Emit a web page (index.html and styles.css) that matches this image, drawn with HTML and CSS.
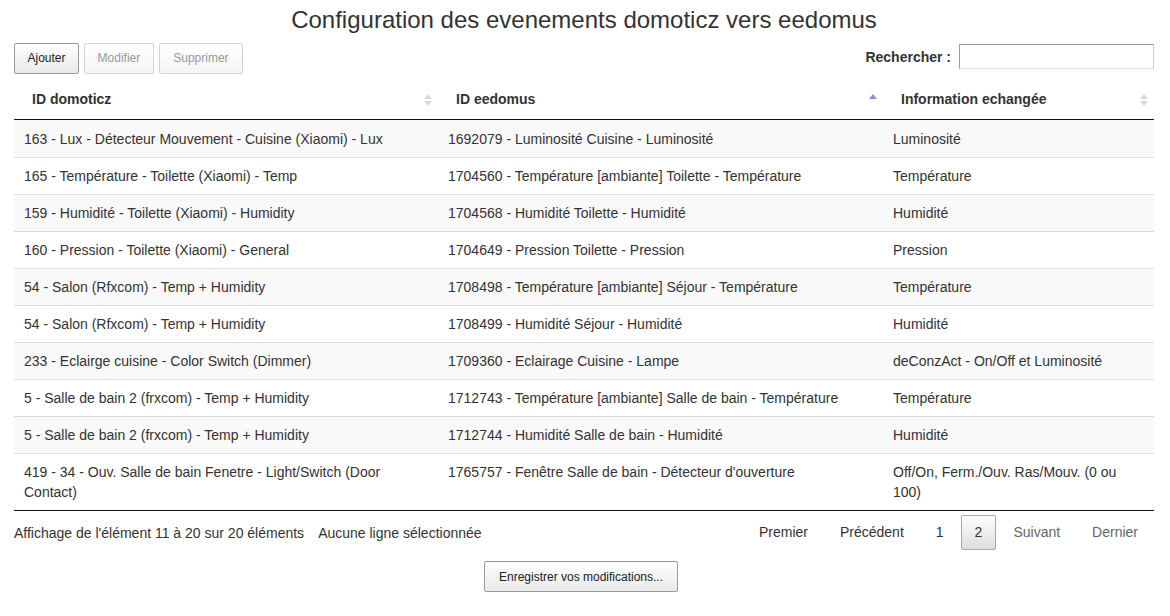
FILE: index.html
```
<!DOCTYPE html>
<html lang="fr">
<head>
<meta charset="utf-8">
<title>Configuration</title>
<link rel="stylesheet" href="styles.css">
</head>
<body>
<div class="page">
  <h1 class="title">Configuration des evenements domoticz vers eedomus</h1>
  <div class="toolbar">
    <div class="btns">
      <button class="btn">Ajouter</button>
      <button class="btn disabled">Modifier</button>
      <button class="btn disabled wide">Supprimer</button>
    </div>
    <label class="search">Rechercher : <input type="text" class="search-input"></label>
  </div>
  <table class="grid">
    <colgroup><col class="c1"><col class="c2"><col class="c3"></colgroup>
    <thead>
      <tr>
        <th>ID domoticz<svg class="sort" width="8" height="14" viewBox="0 0 8 14"><path d="M4 1 L8 6 L0 6 Z M4 13 L8 8 L0 8 Z" fill="#d8d8d8"/></svg></th>
        <th>ID eedomus<svg class="sort" width="8" height="14" viewBox="0 0 8 14"><path d="M4 1 L8 6 L0 6 Z" fill="#8a8fd6"/></svg></th>
        <th>Information echangée<svg class="sort" width="8" height="14" viewBox="0 0 8 14"><path d="M4 1 L8 6 L0 6 Z M4 13 L8 8 L0 8 Z" fill="#d8d8d8"/></svg></th>
      </tr>
    </thead>
    <tbody>
      <tr><td>163 - Lux - Détecteur Mouvement - Cuisine (Xiaomi) - Lux</td><td>1692079 - Luminosité Cuisine - Luminosité</td><td>Luminosité</td></tr>
      <tr><td>165 - Température - Toilette (Xiaomi) - Temp</td><td>1704560 - Température [ambiante] Toilette - Température</td><td>Température</td></tr>
      <tr><td>159 - Humidité - Toilette (Xiaomi) - Humidity</td><td>1704568 - Humidité Toilette - Humidité</td><td>Humidité</td></tr>
      <tr><td>160 - Pression - Toilette (Xiaomi) - General</td><td>1704649 - Pression Toilette - Pression</td><td>Pression</td></tr>
      <tr><td>54 - Salon (Rfxcom) - Temp + Humidity</td><td>1708498 - Température [ambiante] Séjour - Température</td><td>Température</td></tr>
      <tr><td>54 - Salon (Rfxcom) - Temp + Humidity</td><td>1708499 - Humidité Séjour - Humidité</td><td>Humidité</td></tr>
      <tr><td>233 - Eclairge cuisine - Color Switch (Dimmer)</td><td>1709360 - Eclairage Cuisine - Lampe</td><td>deConzAct - On/Off et Luminosité</td></tr>
      <tr><td>5 - Salle de bain 2 (frxcom) - Temp + Humidity</td><td>1712743 - Température [ambiante] Salle de bain - Température</td><td>Température</td></tr>
      <tr><td>5 - Salle de bain 2 (frxcom) - Temp + Humidity</td><td>1712744 - Humidité Salle de bain - Humidité</td><td>Humidité</td></tr>
      <tr><td>419 - 34 - Ouv. Salle de bain Fenetre - Light/Switch (Door Contact)</td><td>1765757 - Fenêtre Salle de bain - Détecteur d'ouverture</td><td>Off/On, Ferm./Ouv. Ras/Mouv. (0 ou 100)</td></tr>
    </tbody>
  </table>
  <div class="footer">
    <div class="info"><span>Affichage de l'élément 11 à 20 sur 20 éléments</span><span class="sel">Aucune ligne sélectionnée</span></div>
    <div class="paging">
      <span class="pg">Premier</span>
      <span class="pg">Précédent</span>
      <span class="pg">1</span>
      <span class="pg current">2</span>
      <span class="pg off">Suivant</span>
      <span class="pg off">Dernier</span>
    </div>
  </div>
  <div class="save-row"><button class="btn save">Enregistrer vos modifications...</button></div>
</div>
</body>
</html>
```
FILE: styles.css
```
* { box-sizing: border-box; }
html, body { margin: 0; padding: 0; background: #fff; }
body { font-family: "Liberation Sans", Arial, sans-serif; color: #333; font-size: 14px; }
.page { width: 1170px; padding: 0 16px 0 14px; }
.title { margin: 0; padding-top: 7px; height: 37px; font-size: 24px; font-weight: normal; text-align: center; line-height: 26px; color: #333; }
.toolbar { display: flex; justify-content: space-between; align-items: center; height: 37px; padding-bottom: 1px; }
.btns { display: flex; gap: 5px; padding-top: 6px; }
.btn { font-family: "Liberation Sans", Arial, sans-serif; font-size: 12px; color: #222; height: 31px; padding: 0 12.5px; border: 1px solid #999; border-radius: 2px; background: linear-gradient(to bottom, #fff 0%, #e9e9e9 100%); }
.btn.disabled { color: #999; border-color: #d5d5d5; background: linear-gradient(to bottom, #fff 0%, #f4f4f4 100%); }
.btn.wide { padding: 0 13.5px; }
.search { font-weight: bold; font-size: 14px; display: flex; align-items: center; gap: 8px; padding-top: 3px; }
.search-input { width: 195px; height: 25px; border: 1px solid #aaa; border-top-color: #999; border-left-color: #999; border-right-color: #ccc; border-bottom-color: #ddd; margin: 0; }
.grid { width: 1140px; border-collapse: separate; border-spacing: 0; table-layout: fixed; }
.c1 { width: 424px; } .c2 { width: 445px; } .c3 { width: 271px; }
th { position: relative; text-align: left; font-weight: bold; height: 46px; padding: 4px 18px 0; border-bottom: 1px solid #111; }
th .sort { position: absolute; right: 6px; top: 19px; }
td { padding: 8px 10px; line-height: 20px; height: 37px; border-top: 1px solid #ddd; vertical-align: top; }
tbody tr:first-child td { border-top: none; height: 37px; padding-top: 9px; }
tbody tr:nth-child(odd) td { background: #f9f9f9; }
tbody tr:last-child td { border-bottom: 1px solid #111; padding-bottom: 8px; }
.footer { display: flex; justify-content: space-between; align-items: flex-start; height: 50px; padding-top: 4px; }
.info { padding-top: 10px; display: flex; gap: 14px; }
.paging { display: flex; align-items: center; padding-right: 1px; }
.pg { display: inline-block; padding: 8px 14px; margin-left: 2px; border: 1px solid transparent; border-radius: 2px; color: #333; line-height: 17px; }
.pg.current { border-color: #a8a8a8; background: linear-gradient(to bottom, #fff 0%, #dcdcdc 100%); padding: 8px 13px; }
.pg.off { color: #666; }
.save-row { display: flex; justify-content: center; padding-right: 6px; }
.save { height: 31px; padding: 0 14px; }
```
